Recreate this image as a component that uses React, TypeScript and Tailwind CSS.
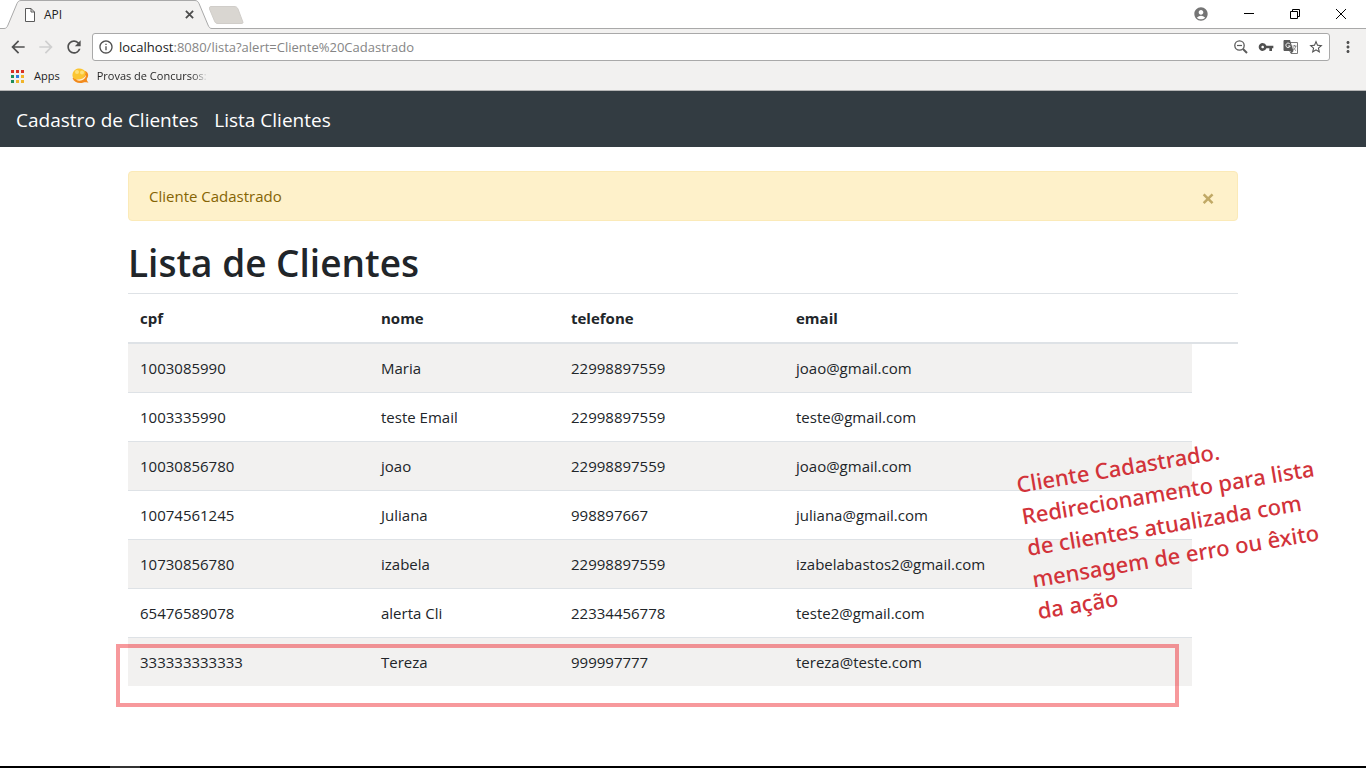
import React from "react";
import {
  MdAccountCircle,
  MdArrowBack,
  MdArrowForward,
  MdInfoOutline,
  MdMoreVert,
  MdRefresh,
  MdStarBorder,
  MdVpnKey,
} from "react-icons/md";

type Client = { cpf: string; nome: string; telefone: string; email: string };

const clients: Client[] = [
  { cpf: "1003085990", nome: "Maria", telefone: "22998897559", email: "joao@gmail.com" },
  { cpf: "1003335990", nome: "teste Email", telefone: "22998897559", email: "teste@gmail.com" },
  { cpf: "10030856780", nome: "joao", telefone: "22998897559", email: "joao@gmail.com" },
  { cpf: "10074561245", nome: "Juliana", telefone: "998897667", email: "juliana@gmail.com" },
  { cpf: "10730856780", nome: "izabela", telefone: "22998897559", email: "izabelabastos2@gmail.com" },
  { cpf: "65476589078", nome: "alerta Cli", telefone: "22334456778", email: "teste2@gmail.com" },
  { cpf: "333333333333", nome: "Tereza", telefone: "999997777", email: "tereza@teste.com" },
];

const appColors = [
  "#d93025", "#d93025", "#d93025",
  "#1e8e5a", "#2a7de1", "#f0b429",
  "#1e8e5a", "#f0b429", "#f0b429",
];

function TabStrip() {
  return (
    <div className="flex h-[29px] items-start bg-white">
      <div className="relative flex h-[29px] w-[209px] items-center pr-3 pl-6">
        <svg className="absolute top-0 left-0" width="217" height="29" viewBox="0 0 217 29" fill="none" aria-hidden="true">
          <path d="M0 29V28.5H4C6 28.5 7 27.5 8 25L17 3.5C18 1.5 19 .5 21 .5H195C197 .5 198 1.5 199 3.5L208 25C209 27.5 210 28.5 212 28.5V29Z" fill="#f2f1f0" />
          <path d="M0 28.5H4C6 28.5 7 27.5 8 25L17 3.5C18 1.5 19 .5 21 .5H195C197 .5 198 1.5 199 3.5L208 25C209 27.5 210 28.5 212 28.5H217" stroke="#a9a9a9" />
        </svg>
        <div className="relative flex flex-1 items-center">
          <svg width="12" height="14" viewBox="0 0 12 14" fill="#fff" stroke="#5a5a5a" aria-hidden="true">
            <path d="M1.5 .5H7L10.5 4V13.5H1.5ZM7 .5V4H10.5" />
          </svg>
          <span className="ml-2 flex-1 text-[12px] leading-4 text-[#222]">API</span>
          <button type="button" aria-label="Fechar guia" className="flex h-4 w-4 items-center justify-center">
            <svg width="9" height="9" viewBox="0 0 10 10" stroke="#4c4c4c" strokeWidth="2" aria-hidden="true">
              <path d="M1 1L9 9M9 1L1 9" />
            </svg>
          </button>
        </div>
      </div>
      <div className="flex h-[29px] flex-1 items-center justify-between border-b border-[#a9a9a9]">
        <button type="button" aria-label="Nova guia" className="pt-[2px]">
          <svg width="36" height="19" viewBox="0 0 36 19" aria-hidden="true">
            <path d="M2 .5H25C27 .5 28 1 29 3L33.5 15C34.5 17 34 17.5 32 17.5H9C7 17.5 6.5 17 5.5 15L.5 3C0 1.5 .5 .5 2 .5Z" fill="#d9d6d1" stroke="#d0cdc9" />
          </svg>
        </button>
        <div className="flex items-center pr-px text-black">
          <button type="button" aria-label="Perfil" className="flex w-12 justify-center text-[#757575]">
            <MdAccountCircle size={16} />
          </button>
          <button type="button" aria-label="Minimizar" className="flex w-12 justify-center">
            <svg width="10" height="10" viewBox="0 0 10 10" stroke="#000" aria-hidden="true"><path d="M0 4.5H10" /></svg>
          </button>
          <button type="button" aria-label="Restaurar" className="flex w-11 justify-center">
            <svg width="10" height="10" viewBox="0 0 10 10" stroke="#000" fill="none" aria-hidden="true">
              <path d="M.5 2.5H7.5V9.5H.5ZM2.5 2.5V.5H9.5V7.5H7.5" />
            </svg>
          </button>
          <button type="button" aria-label="Fechar" className="flex w-12 justify-center">
            <svg width="10" height="10" viewBox="0 0 10 10" stroke="#000" aria-hidden="true"><path d="M0 0L10 10M10 0L0 10" /></svg>
          </button>
        </div>
      </div>
    </div>
  );
}

function ZoomOutIcon() {
  return (
    <svg width="16" height="16" viewBox="0 0 16 16" fill="none" stroke="#5a5a5a" aria-hidden="true">
      <circle cx="6.5" cy="6.5" r="4.7" strokeWidth="1.3" />
      <path d="M4 6.5H9" strokeWidth="1.2" />
      <path d="M10 10L14 14" strokeWidth="2" />
    </svg>
  );
}

function TranslateIcon() {
  return (
    <svg width="16" height="16" viewBox="0 0 16 16" fill="none" aria-hidden="true">
      <path d="M6.5 3.5H14.5V14.5H8L6.5 11.5" fill="#fff" stroke="#7a7a7a" />
      <path d="M1.5 1H7L10.5 12H1.5C1 12 .5 11.5 .5 11V2C.5 1.5 1 1 1.5 1Z" fill="#5a5a5a" />
      <path d="M7 5.2A2.2 2.2 0 1 0 7.2 7H5.2" stroke="#fff" />
      <path d="M9.5 7H13.5M11.5 6V7M12.8 7C12.5 9 11 10.5 10 11M10.5 8.5C11 10 12 11 13 11.5" stroke="#7a7a7a" strokeWidth=".9" />
      <path d="M7.5 12H10.5L8.5 14.5Z" fill="#5a5a5a" />
    </svg>
  );
}

function Toolbar() {
  return (
    <div className="flex h-9 items-center bg-[#f2f1f0] px-2 text-[#505050]">
      <button type="button" aria-label="Voltar" className="flex w-7 shrink-0"><MdArrowBack size={20} /></button>
      <button type="button" aria-label="Avançar" className="flex w-7 shrink-0 text-[#cfcfcf]"><MdArrowForward size={20} /></button>
      <button type="button" aria-label="Recarregar" className="flex w-7 shrink-0"><MdRefresh size={20} /></button>
      <div className="flex h-7 flex-1 items-center rounded-[3px] border border-[#a9a9a9] bg-white px-[5px]">
        <MdInfoOutline size={16} />
        <div className="relative ml-[5px] flex-1 text-[13px] leading-5">
          <input
            aria-label="Endereço"
            readOnly
            value="localhost:8080/lista?alert=Cliente%20Cadastrado"
            className="w-full bg-transparent text-transparent outline-none"
          />
          <span aria-hidden="true" className="pointer-events-none absolute inset-0 text-[#858585]">
            <span className="text-[#222]">localhost</span>:8080/lista?alert=Cliente%20Cadastrado
          </span>
        </div>
        <div className="flex items-center gap-[9px]">
          <button type="button" aria-label="Zoom"><ZoomOutIcon /></button>
          <button type="button" aria-label="Senhas"><MdVpnKey size={16} /></button>
          <button type="button" aria-label="Traduzir"><TranslateIcon /></button>
          <button type="button" aria-label="Favoritar"><MdStarBorder size={16} /></button>
        </div>
      </div>
      <button type="button" aria-label="Menu" className="ml-2 flex w-5 justify-center"><MdMoreVert size={18} /></button>
    </div>
  );
}

function BookmarksBar() {
  return (
    <div className="flex h-[26px] items-center border-b border-[#b5b5b5] bg-[#f2f1f0] px-[11px] pb-[3px] text-[11px] leading-4 text-[#222]">
      <a href="#apps" className="flex items-center gap-[10px]">
        <svg width="13" height="13" viewBox="0 0 13 13" aria-hidden="true">
          {appColors.map((color, i) => (
            <rect key={i} x={(i % 3) * 5} y={Math.floor(i / 3) * 5} width="3" height="3" fill={color} />
          ))}
        </svg>
        Apps
      </a>
      <a href="#provas" className="ml-3 flex items-center gap-2">
        <svg width="17" height="16" viewBox="0 0 17 16" aria-hidden="true">
          <path d="M13 3C16.500 4 17 8 15 10.500C14.500 12 15 13 16.500 14.500C14 14.500 13 14 11.500 14.500C7 16 2 14.500 .5 10Z" fill="#f28a1c" />
          <path d="M3 2C6 -.5 12 .5 13.500 4C14 8 11 11 7 11.500C3 12 0 9.500 .5 6.500C.7 4.500 1.500 3 3 2Z" fill="#fbc531" />
          <path d="M4 11.500C8 12 12 10.500 14 7C14 11.500 8 14.500 4 11.500Z" fill="#fff2cf" />
          <circle cx="5" cy="4" r="2" fill="#fde07a" />
          <circle cx="10" cy="4.500" r="2" fill="#fde07a" />
        </svg>
        <span className="bg-gradient-to-r from-[#222] from-85% to-[#e4e4e4] bg-clip-text text-transparent">Provas de Concursos:</span>
      </a>
    </div>
  );
}

function ClientTable() {
  return (
    <table className="w-full table-fixed border-separate border-spacing-0 text-left text-[15px] leading-6">
      <colgroup>
        <col className="w-[241px]" />
        <col className="w-[190px]" />
        <col className="w-[225px]" />
        <col />
        <col className="w-[46px]" />
      </colgroup>
      <thead>
        <tr>
          {["cpf", "nome", "telefone", "email", ""].map((label) => (
            <th key={label} className="border-t border-b-2 border-[#dee2e6] p-3 font-bold">{label}</th>
          ))}
        </tr>
      </thead>
      <tbody>
        {clients.map((c) => (
          <tr key={c.cpf} className="[&:not(:first-child)>td]:border-t [&:nth-child(odd)>td]:bg-[#f2f1f0]">
            {[c.cpf, c.nome, c.telefone, c.email].map((value, i) => (
              <td key={i} className="border-[#dee2e6] p-3">{value}</td>
            ))}
          </tr>
        ))}
      </tbody>
    </table>
  );
}

export default function App() {
  return (
    <div className="flex min-h-screen flex-col bg-white font-['Open_Sans','Noto_Sans',sans-serif] text-[#212529]">
      <header>
        <TabStrip />
        <Toolbar />
        <BookmarksBar />
      </header>
      <nav className="flex h-14 items-center gap-4 bg-[#333c42] px-4 pt-px text-[19px] leading-8 text-white">
        <a href="#cadastro">Cadastro de Clientes</a>
        <a href="#lista">Lista Clientes</a>
      </nav>
      <main className="relative mx-auto w-full max-w-[1140px] flex-1 px-[15px] pt-6">
        <div role="alert" className="flex h-[50px] items-center justify-between rounded border border-[#fbeab8] bg-[#fef1ca] pr-[22px] pl-5 text-[15px] text-[#856404]">
          <span>Cliente Cadastrado</span>
          <button type="button" aria-label="Fechar alerta" className="pt-1 text-2xl font-bold opacity-50">×</button>
        </div>
        <h1 className="mt-[18px] mb-[6px] text-[37px] leading-12 font-semibold">Lista de Clientes</h1>
        <ClientTable />
        <div className="pointer-events-none absolute top-[497px] right-[74px] left-[3px] h-[63px] border-4 border-[#ed1c24]/45" />
        <p className="pointer-events-none absolute top-[296px] left-[912px] w-max rotate-[-9.4deg] font-['Noto_Sans',sans-serif] text-[22px] leading-8 font-medium text-[#d2333a]">
          Cliente Cadastrado.<br />
          Redirecionamento para lista<br />
          de clientes atualizada com<br />
          mensagem de erro ou êxito<br />
          da ação
        </p>
      </main>
      <footer className="flex h-[2px] bg-black pl-[110px]">
        <div className="w-[30px] bg-[#333]" />
      </footer>
    </div>
  );
}
